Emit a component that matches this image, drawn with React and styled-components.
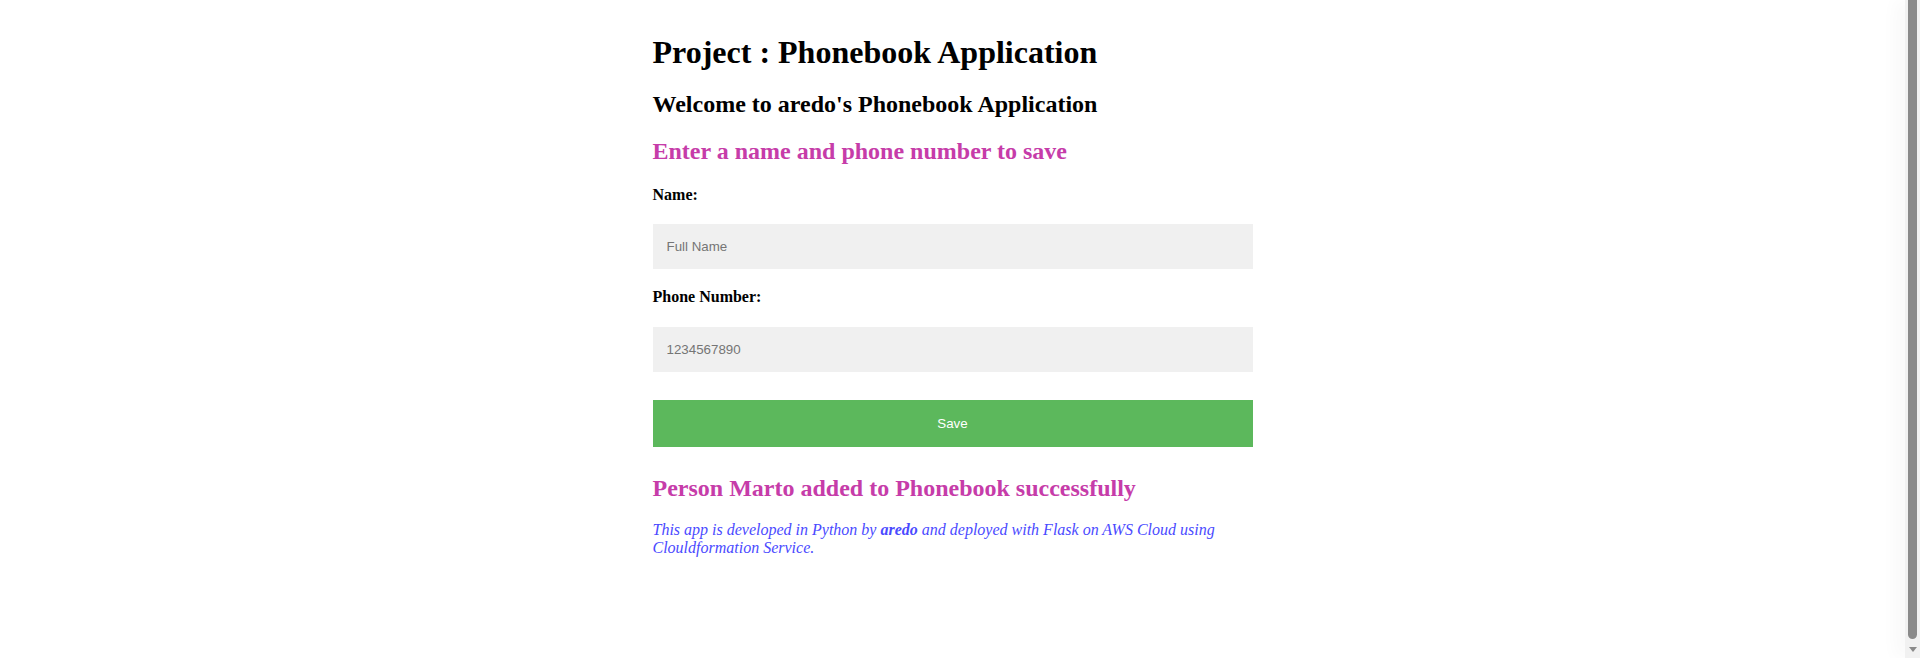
import styled, { createGlobalStyle } from 'styled-components';

const GlobalStyle = createGlobalStyle`
    html, body {
        margin: 0;
        overflow: hidden;
    }

    body {
        background: #ffffff;
        font-family: "Liberation Serif", "Times New Roman", serif;
        color: #000000;
    }
`;

const Shell = styled.div`
    display: flex;
    height: 100vh;
`;

const Viewport = styled.div`
    flex: 1;
    min-width: 0;
    overflow: hidden;
`;

const ScrollBar = styled.div`
    display: flex;
    flex-direction: column;
    align-items: center;
    width: 15px;
    background: #f1f1f1;
    box-shadow: -8px 0 18px rgba(0, 0, 0, 0.035);
`;

const Thumb = styled.div`
    flex: 1;
    width: 9px;
    background: #8a8a8a;
    border-radius: 0 0 5px 5px;
    margin-bottom: 8px;
`;

const Arrow = styled.div`
    width: 0;
    height: 0;
    margin-bottom: 6px;
    border-left: 4px solid transparent;
    border-right: 4px solid transparent;
    border-top: 5px solid #8a8a8a;
`;

const Page = styled.main`
    width: 600px;
    margin: 0 auto;
    padding-top: 34px;
`;

const Title = styled.h1`
    margin: 0;
    font-size: 32px;
    line-height: 37px;
    font-weight: bold;
`;

const Welcome = styled.h2`
    margin: 19px 0 0;
    font-size: 24px;
    line-height: 28px;
    font-weight: bold;
`;

const Notice = styled.h3`
    margin: ${(props) => props.$top || 19}px 0 0;
    font-size: 24px;
    line-height: 28px;
    font-weight: bold;
    color: #c63ca9;
`;

const Form = styled.form`
    display: flex;
    flex-direction: column;
`;

const Label = styled.label`
    margin: ${(props) => props.$top}px 0 0;
    font-size: 16px;
    line-height: 18px;
    font-weight: bold;
`;

const Input = styled.input`
    box-sizing: border-box;
    width: 100%;
    height: 45px;
    margin: ${(props) => props.$top}px 0 0;
    padding: 0 14px;
    border: none;
    background: #f0f0f0;
    font-family: "Liberation Sans", Arial, sans-serif;
    font-size: 13.33px;
    color: #333333;
    outline: none;

    &::placeholder {
        color: #757575;
    }
`;

const SaveButton = styled.button`
    box-sizing: border-box;
    width: 100%;
    height: 47px;
    margin: 28px 0 0;
    border: none;
    background: #5cb85c;
    color: #ffffff;
    font-family: "Liberation Sans", Arial, sans-serif;
    font-size: 13.33px;
    cursor: pointer;
`;

const Footer = styled.p`
    margin: 19px 0 0;
    font-size: 16px;
    line-height: 18px;
    font-style: italic;
    color: #4a4aff;

    b {
        font-weight: bold;
    }
`;

const App = () => {
    return (
        <Shell>
            <GlobalStyle />
            <Viewport>
                <Page>
                    <Title>Project : Phonebook Application</Title>
                    <Welcome>Welcome to aredo's Phonebook Application</Welcome>
                    <Notice>Enter a name and phone number to save</Notice>

                    <Form onSubmit={(e) => e.preventDefault()}>
                        <Label $top={21} htmlFor="username">Name:</Label>
                        <Input $top={20} id="username" type="text" placeholder="Full Name" />

                        <Label $top={19} htmlFor="phonenumber">Phone Number:</Label>
                        <Input $top={21} id="phonenumber" type="text" placeholder="1234567890" />

                        <SaveButton type="submit">Save</SaveButton>
                    </Form>

                    <Notice $top={27}>Person Marto added to Phonebook successfully</Notice>

                    <Footer>
                        This app is developed in Python by <b>aredo</b> and deployed with Flask on AWS Cloud using Clouldformation Service.
                    </Footer>
                </Page>
            </Viewport>
            <ScrollBar>
                <Thumb />
                <Arrow />
            </ScrollBar>
        </Shell>
    );
};

export default App;
